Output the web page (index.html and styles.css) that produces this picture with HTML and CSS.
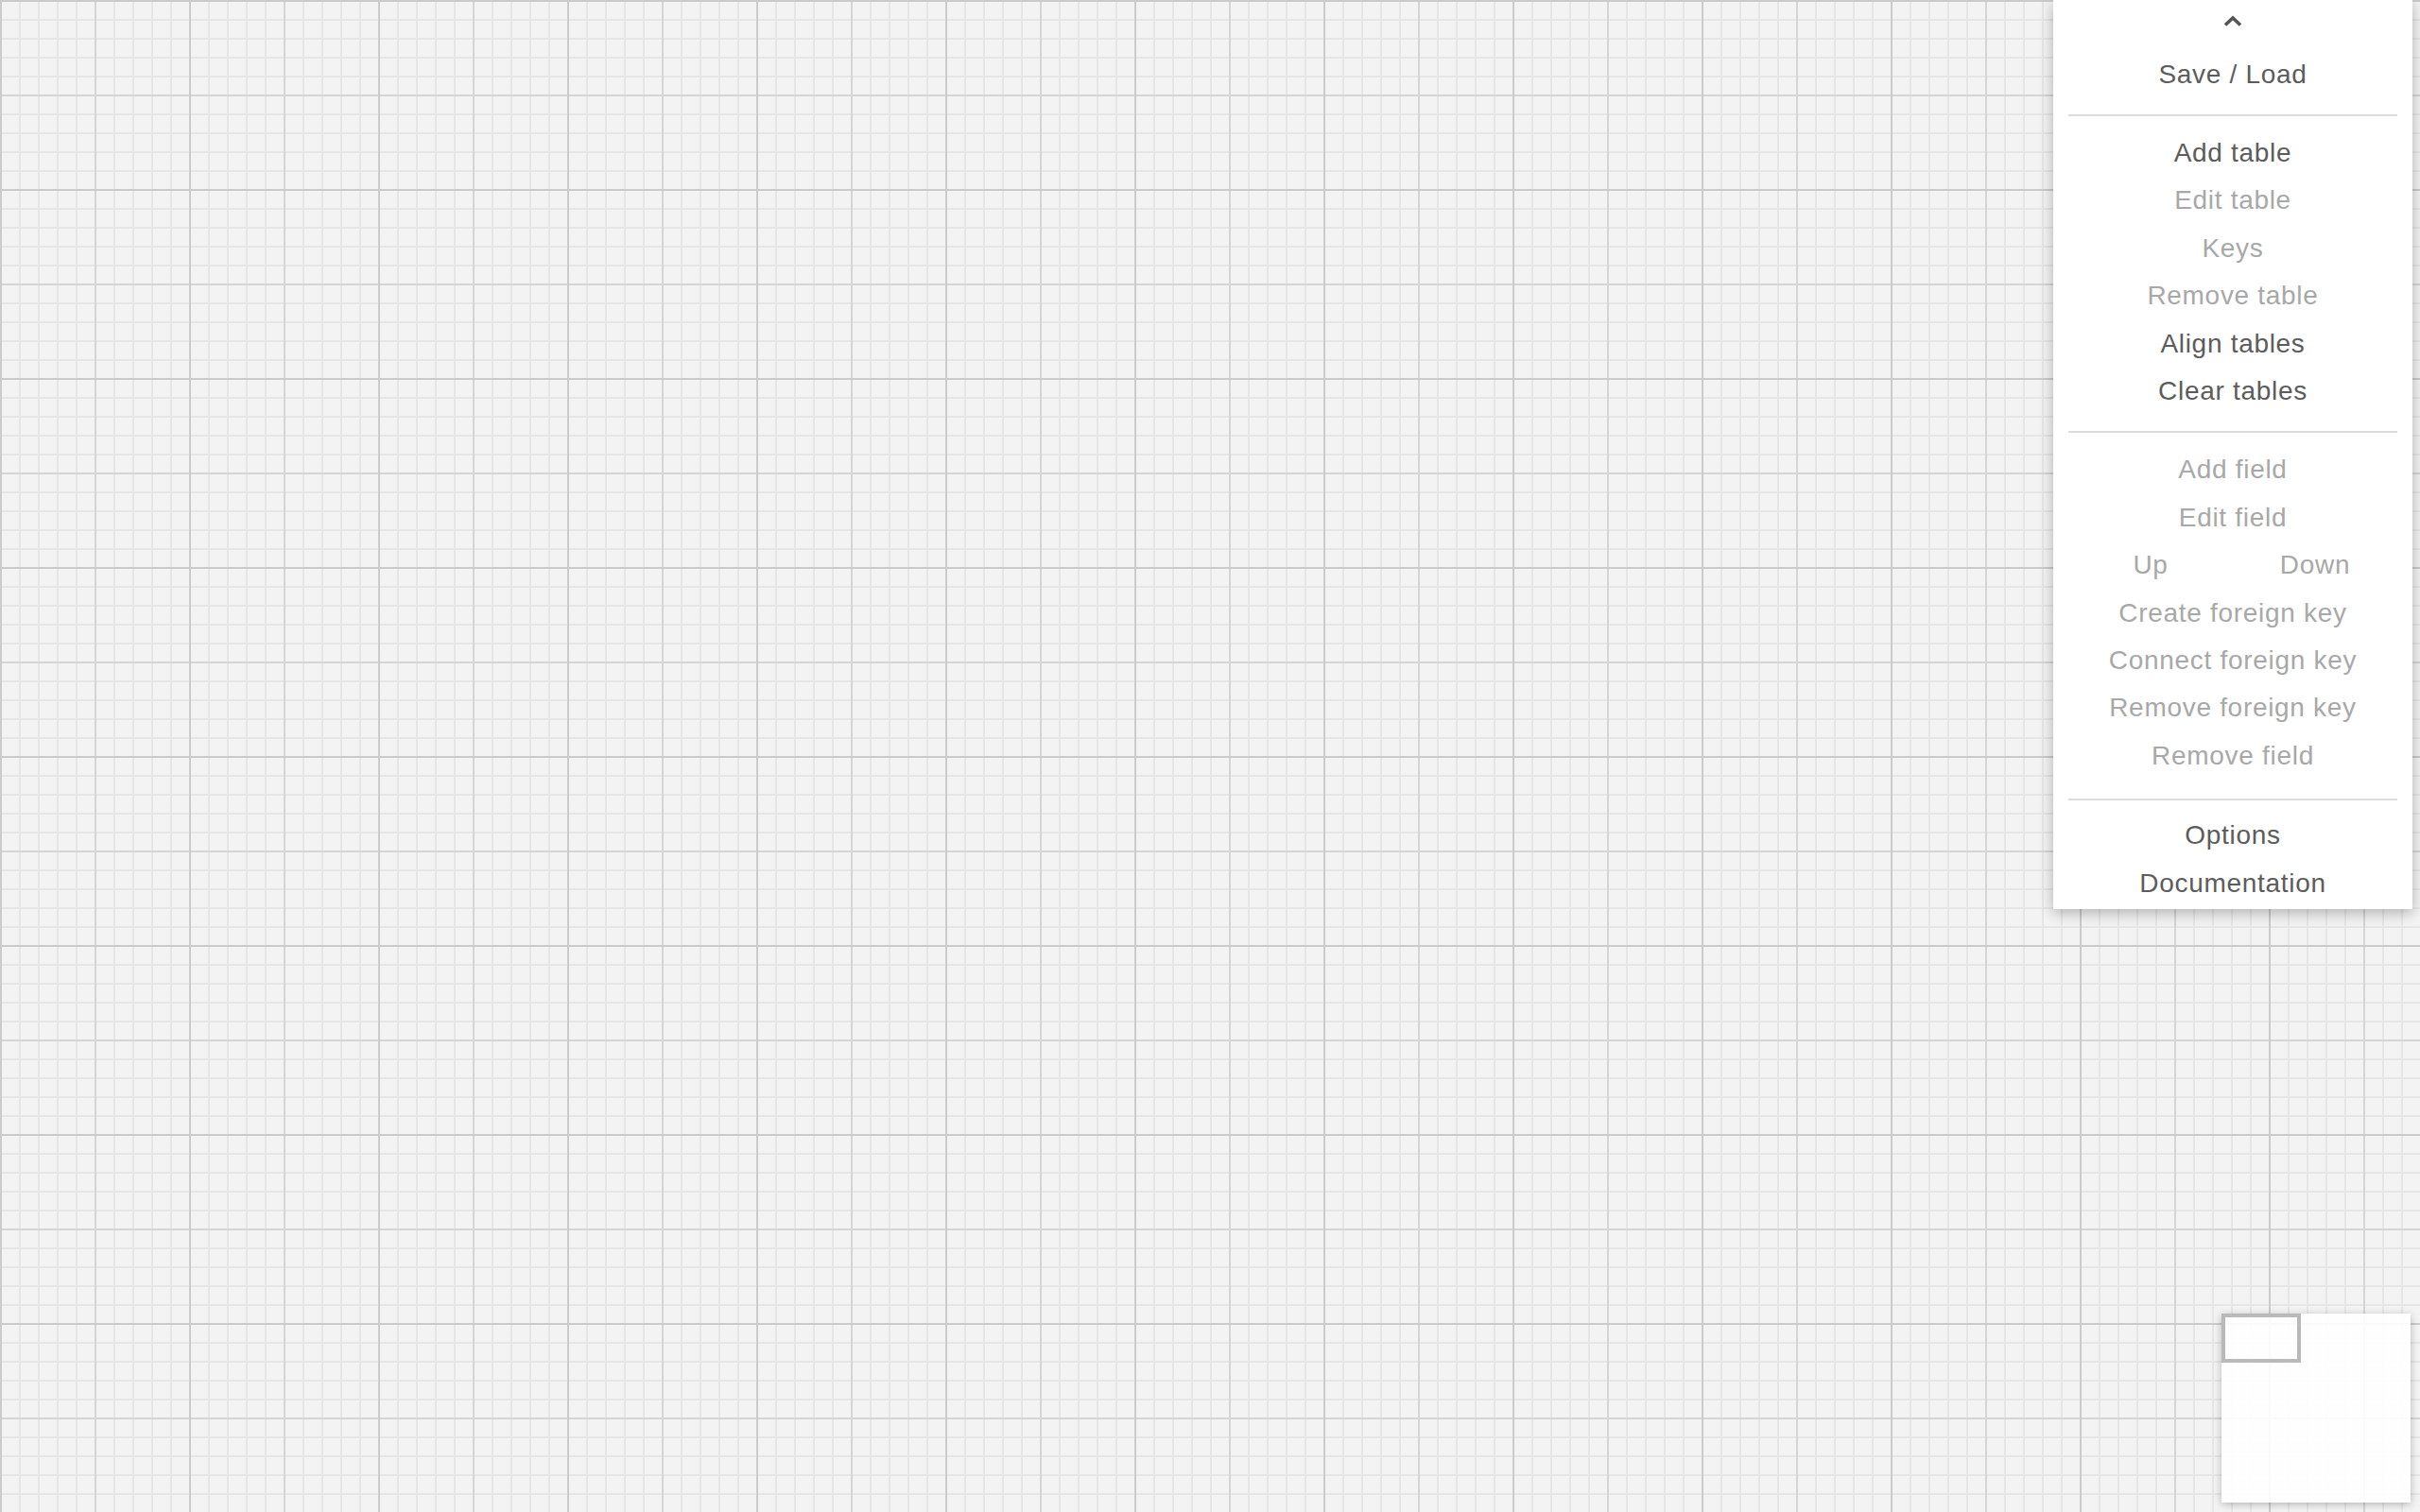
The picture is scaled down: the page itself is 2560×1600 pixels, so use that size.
FILE: index.html
```html
<!DOCTYPE html>
<html lang="en">
<head>
<meta charset="utf-8">
<title>SQL Designer</title>
<link rel="stylesheet" href="styles.css">
</head>
<body>
<div class="area"></div>

<div class="controls">
  <div class="toggle">
    <svg class="chevron" width="20" height="12" viewBox="0 0 20 12"><polyline points="2,10.5 10,3 18,10.5" fill="none" stroke="#555" stroke-width="3.6"/></svg>
  </div>
  <div class="item">Save / Load</div>
  <hr class="sep">
  <div class="item">Add table</div>
  <div class="item off">Edit table</div>
  <div class="item off">Keys</div>
  <div class="item off">Remove table</div>
  <div class="item">Align tables</div>
  <div class="item">Clear tables</div>
  <hr class="sep">
  <div class="item off">Add field</div>
  <div class="item off">Edit field</div>
  <div class="pair">
    <div class="item off">Up</div>
    <div class="item off">Down</div>
  </div>
  <div class="item off">Create foreign key</div>
  <div class="item off">Connect foreign key</div>
  <div class="item off">Remove foreign key</div>
  <div class="item off">Remove field</div>
  <hr class="sep sep-last">
  <div class="item">Options</div>
  <div class="item">Documentation</div>
</div>

<div class="minimap">
  <div class="viewport"></div>
</div>
</body>
</html>
```

FILE: styles.css
```css
html, body {
  margin: 0;
  padding: 0;
  width: 100%;
  height: 100%;
  overflow: hidden;
}

body {
  font-family: "Liberation Sans", Arial, sans-serif;
  background-color: #f3f3f3;
}

.area {
  width: 100%;
  height: 100%;
  background-color: #f3f3f3;
  background-image:
    linear-gradient(to right, #cbcbcb 2px, transparent 2px),
    linear-gradient(to bottom, #cbcbcb 2px, transparent 2px),
    linear-gradient(to right, #d5d5d5 2px, transparent 2px),
    linear-gradient(to bottom, #d5d5d5 2px, transparent 2px),
    linear-gradient(to right, #e6e6e6 2px, transparent 2px),
    linear-gradient(to bottom, #e6e6e6 2px, transparent 2px);
  background-size:
    200px 200px, 200px 200px,
    100px 100px, 100px 100px,
    20px 20px, 20px 20px;
}

.controls {
  position: absolute;
  top: 0;
  right: 8px;
  width: 380px;
  box-sizing: border-box;
  padding: 0 16px 1.5px;
  background: #fff;
  box-shadow: 0 4px 14px rgba(0, 0, 0, 0.28);
  text-align: center;
}

.toggle {
  height: 53.5px;
  box-sizing: border-box;
  padding-top: 16px;
  display: flex;
  justify-content: center;
  align-items: flex-start;
}

.chevron {
  display: block;
}

.item {
  font-size: 28px;
  line-height: 50.4px;
  letter-spacing: 0.7px;
  color: #5c5c5c;
  white-space: nowrap;
}

.item.off {
  color: #a8a8a8;
}

.pair {
  display: flex;
}

.pair .item {
  flex: 1 1 0;
}

.sep {
  border: 0;
  height: 2px;
  background: #dcdcdc;
  margin: 17px 0 14px;
}

.sep-last {
  margin: 20px 0 12px;
}

.minimap {
  position: absolute;
  right: 10px;
  bottom: 10px;
  width: 200px;
  height: 200px;
  background: rgba(255, 255, 255, 0.9);
  box-shadow: 0 2px 8px rgba(0, 0, 0, 0.25);
}

.viewport {
  width: 84px;
  height: 52px;
  box-sizing: border-box;
  border: 4px solid #b9b9b9;
}
```
